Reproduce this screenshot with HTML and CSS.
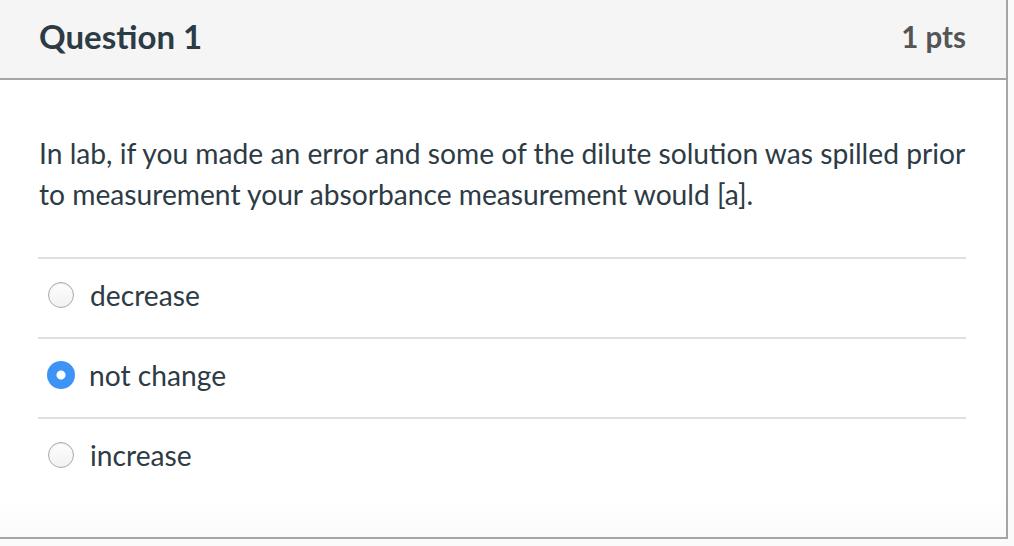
FILE: index.html
```html
<!DOCTYPE html>
<html>
<head>
<meta charset="utf-8">
<link rel="stylesheet" href="styles.css">
</head>
<body>
<div class="card">
  <div class="header">
    <h2 class="title">Question 1</h2>
    <span class="pts">1 pts</span>
  </div>
  <div class="content">
    <p class="text">In lab, if you made an error and some of the dilute solution was spilled prior to measurement your absorbance measurement would [a].</p>
    <div class="answers">
      <label class="answer"><span class="radio"></span><span class="label">decrease</span></label>
      <label class="answer"><span class="radio checked"></span><span class="label">not change</span></label>
      <label class="answer"><span class="radio"></span><span class="label">increase</span></label>
    </div>
  </div>
</div>
</body>
</html>
```
FILE: styles.css
```css
html, body {
  margin: 0;
  padding: 0;
  background: #fafafa;
}
body {
  font-family: Lato, "Open Sans", sans-serif;
  color: #2d3b45;
}
.card {
  width: 1006px;
  background: linear-gradient(to bottom, #ffffff 0, #ffffff 496px, #fafafa 538px);
  border-right: 2px solid #a5a5a5;
  border-bottom: 2px solid #a5a5a5;
}
.header {
  box-sizing: border-box;
  background: #f5f5f5;
  border-bottom: 2px solid #a5a5a5;
  height: 80px;
  display: flex;
  align-items: center;
  justify-content: space-between;
  padding: 0 40px 6px 39px;
}
.title {
  margin: 0;
  font-size: 33px;
  font-weight: 700;
  color: #2d3b45;
}
.pts {
  font-size: 29.5px;
  font-weight: 700;
  color: #555555;
}
.content {
  padding: 0 40px 40px 38px;
}
.text {
  margin: 0 -12px 0 0;
  padding: 53px 0 42px 1px;
  font-size: 28.2px;
  line-height: 41px;
}
.answers {
  display: flex;
  flex-direction: column;
}
.answer {
  display: flex;
  align-items: center;
  height: 71px;
  padding-bottom: 7px;
  border-top: 2px solid #dfdfdf;
  padding-left: 10px;
  font-size: 28.2px;
}
.radio {
  width: 24px;
  height: 24px;
  border-radius: 50%;
  border: 1px solid #aaaaaa;
  background: linear-gradient(to bottom, #fdfdfd, #f2f2f2);
  box-shadow: inset 0 1px 1px rgba(0,0,0,0.08);
  margin-right: 16px;
  flex: none;
}
.radio.checked {
  width: 28px;
  height: 28px;
  margin-left: -1px;
  margin-right: 14px;
  border: none;
  background: radial-gradient(circle, #ffffff 0, #ffffff 4px, #3d94f6 5px);
  box-shadow: none;
}
.label {
  color: #2d3b45;
}
```
